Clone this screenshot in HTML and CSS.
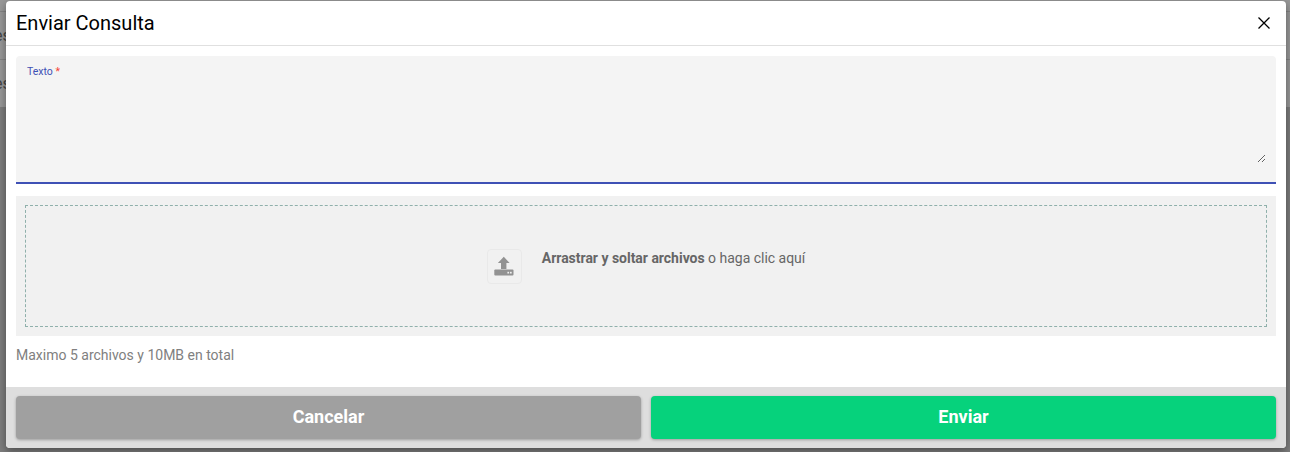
FILE: index.html
```html
<!DOCTYPE html>
<html lang="en">
  <head>
    <meta charset="UTF-8" />
    <meta name="viewport" content="width=device-width, initial-scale=1.0" />
    <title>Enviar Consulta</title>
    <link rel="stylesheet" href="styles.css">
  </head>
  <body>
    <!-- Page behind the dialog -->
    <div class="backdrop">
      <div class="backdrop-row">es</div>
      <div class="backdrop-row">es</div>
    </div>

    <div class="modal">
      <div class="modal-header">
        <h2>Enviar Consulta</h2>
        <button class="close-button" type="button" aria-label="Cerrar">
          <svg viewBox="0 0 12 12" width="12" height="12">
            <path d="M0.5 0.5 11.5 11.5M11.5 0.5 0.5 11.5" fill="none" stroke="#000" stroke-width="1.3" />
          </svg>
        </button>
      </div>

      <div class="modal-body">
        <div class="text-field">
          <label for="texto">Texto <span class="required">*</span></label>
          <textarea id="texto"></textarea>
        </div>

        <div class="dropzone">
          <div class="dropzone-inner">
            <div class="upload-icon">
              <svg viewBox="0 0 20 20" width="20" height="20">
                <path d="M9.8 0.7 3.9 7H7V13H12.4V7H15.6z" fill="#929292" />
                <rect x="0.3" y="13.5" width="19.2" height="6" rx="1" fill="#929292" />
                <rect x="13.4" y="15.8" width="1.7" height="1.7" fill="#f1f1f1" />
                <rect x="16" y="15.8" width="1.7" height="1.7" fill="#f1f1f1" />
              </svg>
            </div>
            <p><b>Arrastrar y soltar archivos</b> o haga clic aquí</p>
          </div>
        </div>

        <p class="hint">Maximo 5 archivos y 10MB en total</p>
      </div>

      <div class="modal-footer">
        <button class="action-button cancel-button" type="button">Cancelar</button>
        <button class="action-button send-button" type="button">Enviar</button>
      </div>
    </div>
  </body>
</html>
```

FILE: styles.css
```css
* {
  box-sizing: border-box;
}

html,
body {
  height: 100%;
}

body {
  font-family: Roboto, sans-serif;
  margin: 0;
  padding: 1px 4px 4px 6px;
  background-color: #7d7d7d;
  overflow: hidden;
  position: relative;
}

/* Faded page showing at the left edge */
.backdrop {
  position: absolute;
  top: 0;
  left: 0;
  width: 100%;
  height: 107px;
  padding-top: 11px;
  background-color: #989898;
  color: #444;
  font-size: 16px;
}

.backdrop-row {
  height: 48px;
  padding: 14px 0 0 0;
  border-top: 1px solid #848484;
  text-indent: -6px;
}

.modal {
  position: relative;
  z-index: 2;
  display: flex;
  flex-direction: column;
  height: 447px;
  background-color: #fff;
  border-radius: 4px;
  box-shadow: 0 3px 8px rgba(0, 0, 0, 0.4);
  overflow: hidden;
}

.modal-header {
  display: flex;
  align-items: center;
  justify-content: space-between;
  height: 45px;
  padding: 0 16px 0 10px;
  border-bottom: 1px solid #e0e0e0;
}

.modal-header h2 {
  margin: 0;
  font-size: 20px;
  font-weight: 400;
  color: #000;
}

.close-button {
  display: flex;
  padding: 0;
  background: none;
  border: none;
}

.modal-body {
  flex: 1;
  padding: 10px 10px 0;
}

.text-field {
  display: flex;
  flex-direction: column;
  height: 128px;
  padding: 10px 10px 0 11px;
  background-color: #f4f4f4;
  border-bottom: 2px solid #3f51b5;
  border-radius: 4px 4px 0 0;
}

.text-field label {
  font-size: 10.5px;
  line-height: 12px;
  color: #3f51b5;
}

.required {
  color: #f44336;
}

.text-field textarea {
  flex: 1;
  margin-bottom: 19px;
  background: none;
  border: none;
  outline: none;
}

.dropzone {
  height: 140px;
  margin-top: 12px;
  padding: 9px;
  background-color: #f1f1f1;
}

.dropzone-inner {
  display: flex;
  align-items: center;
  justify-content: center;
  gap: 20px;
  height: 100%;
  border: 1px dashed #8fb0ab;
}

.upload-icon {
  display: flex;
  align-items: center;
  justify-content: center;
  width: 35px;
  height: 35px;
  background-color: #f1f1f1;
  border: 1px solid #e9e9e9;
  border-radius: 4px;
}

.dropzone-inner p {
  margin: 0 0 17px;
  font-size: 14px;
  letter-spacing: -0.02px;
  color: #666;
}

.hint {
  margin: 11px 0 0;
  font-size: 14px;
  line-height: 16px;
  color: #808080;
}

.modal-footer {
  display: flex;
  gap: 10px;
  height: 61px;
  padding: 9px 10px;
  background-color: #dedede;
}

.action-button {
  flex: 1;
  padding: 0 0 2px;
  font-family: inherit;
  font-size: 18px;
  font-weight: 700;
  color: #fff;
  border: none;
  border-radius: 4px;
  box-shadow: 0 1px 3px rgba(0, 0, 0, 0.3);
}

.cancel-button {
  background-color: #a0a0a0;
}

.send-button {
  background-color: #06d27c;
}
```
